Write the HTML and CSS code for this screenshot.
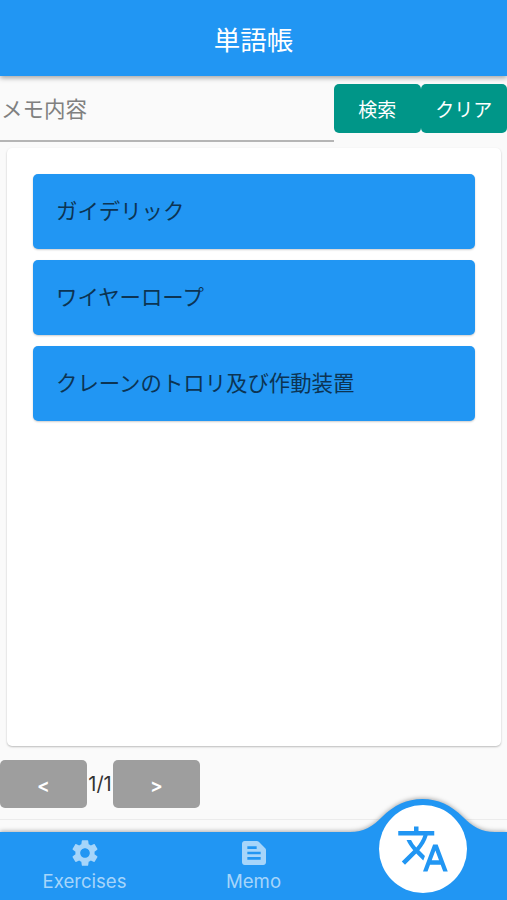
FILE: index.html
```html
<!DOCTYPE html>
<html lang="ja">

<head>
   <meta charset="UTF-8">
   <meta name="viewport" content="width=device-width, initial-scale=1.0">
   <title>単語帳</title>
   <link rel="stylesheet" href="styles.css">
</head>

<body>
   <div class="app">
      <header class="app-bar">
         <h1>単語帳</h1>
      </header>

      <div class="search">
         <input type="text" class="search-input" placeholder="メモ内容">
         <button class="btn">検索</button>
         <button class="btn">クリア</button>
      </div>

      <main class="card">
         <div class="word">ガイデリック</div>
         <div class="word">ワイヤーロープ</div>
         <div class="word">クレーンのトロリ及び作動装置</div>
      </main>

      <div class="pager">
         <button class="btn page-btn">&lt;</button>
         <span class="page-count">1/1</span>
         <button class="btn page-btn">&gt;</button>
      </div>

      <nav class="nav">
         <!-- Bar background with the raised bump -->
         <svg class="nav-shape" viewBox="0 0 507 110">
            <path d="M0 42H350C364 42 373 36 382 27C394 15 407 9 422.5 9C438 9 451 15 463 27C472 36 481 42 495 42H507V110H0Z" />
         </svg>
         <a class="nav-item">
            <svg class="nav-icon" viewBox="0 0 24 24">
               <path d="M19.14 12.94c.04-.3.06-.61.06-.94 0-.32-.02-.64-.07-.94l2.03-1.58c.18-.14.23-.41.12-.61l-1.92-3.32c-.12-.22-.37-.29-.59-.22l-2.39.96c-.5-.38-1.03-.7-1.62-.94l-.36-2.54c-.04-.24-.24-.41-.48-.41h-3.84c-.24 0-.43.17-.47.41l-.36 2.54c-.59.24-1.13.57-1.62.94l-2.39-.96c-.22-.08-.47 0-.59.22L2.74 8.87c-.12.21-.08.47.12.61l2.03 1.58c-.05.3-.09.63-.09.94s.02.64.07.94l-2.03 1.58c-.18.14-.23.41-.12.61l1.92 3.32c.12.22.37.29.59.22l2.39-.96c.5.38 1.03.7 1.62.94l.36 2.54c.05.24.24.41.48.41h3.84c.24 0 .44-.17.47-.41l.36-2.54c.59-.24 1.13-.56 1.62-.94l2.39.96c.22.08.47 0 .59-.22l1.92-3.32c.12-.22.07-.47-.12-.61l-2.01-1.58zM12 15.6c-1.98 0-3.6-1.62-3.6-3.6s1.62-3.6 3.6-3.6 3.6 1.62 3.6 3.6-1.62 3.6-3.6 3.6z" />
            </svg>
            <span>Exercises</span>
         </a>
         <a class="nav-item">
            <svg class="nav-icon" viewBox="0 0 24 24">
               <path d="M20.41 8.41l-4.83-4.83c-.37-.37-.88-.58-1.41-.58H5c-1.1 0-2 .9-2 2v14c0 1.1.9 2 2 2h14c1.1 0 2-.9 2-2V9.83c0-.53-.21-1.04-.59-1.42zM7 7h7v2H7V7zm10 10H7v-2h10v2zm0-4H7v-2h10v2z" />
            </svg>
            <span>Memo</span>
         </a>
         <a class="nav-item">
            <span class="nav-active">
               <svg viewBox="0 0 24 24">
                  <path d="M12.87 15.07l-2.54-2.51.03-.03c1.74-1.94 2.98-4.17 3.71-6.53H17V4h-7V2H8v2H1v1.99h11.17C11.5 7.92 10.44 9.75 9 11.35 8.07 10.32 7.3 9.19 6.69 8h-2c.73 1.63 1.73 3.17 2.98 4.56l-5.09 5.02L4 19l5-5 3.11 3.11.76-2.04zM18.5 10h-2L12 22h2l1.12-3h4.75L21 22h2l-4.5-12zm-2.62 7l1.62-4.33L19.12 17h-3.24z" />
               </svg>
            </span>
         </a>
      </nav>
   </div>
</body>

</html>
```
FILE: styles.css
```css
* {
   box-sizing: border-box;
}

body {
   margin: 0;
   background-color: #fafafa;
   font-family: Inter, "Noto Sans CJK JP", sans-serif;
   color: #333;
}

.app {
   display: flex;
   flex-direction: column;
   height: 900px;
   overflow: hidden;
}

/* Top bar */
.app-bar {
   display: flex;
   align-items: center;
   justify-content: center;
   height: 76px;
   background-color: #2196f3;
   box-shadow: 0 2px 5px rgba(0, 0, 0, 0.35);
}

.app-bar h1 {
   margin: 0;
   font-size: 26.5px;
   font-weight: 400;
   color: #fff;
}

/* Search row */
.search {
   display: flex;
   align-items: flex-start;
   height: 66px;
   padding-top: 8px;
}

.search-input {
   flex: 1;
   min-width: 0;
   height: 58px;
   padding: 0 1px 7px;
   border: none;
   border-bottom: 2px solid #b5b5b5;
   background: none;
   font-family: inherit;
   font-size: 21.5px;
   outline: none;
}

.search-input::placeholder {
   color: #808080;
   opacity: 1;
}

.btn {
   width: 86.5px;
   height: 49px;
   padding: 0;
   border: none;
   border-radius: 5px;
   background-color: #009688;
   color: #fff;
   font-family: inherit;
   font-size: 19px;
   font-weight: 400;
}

/* Word list */
.card {
   display: flex;
   flex-direction: column;
   gap: 11px;
   height: 598px;
   margin: 6px 6px 0 7px;
   padding: 26px;
   border-radius: 5px;
   background-color: #fff;
   box-shadow: 0 1px 2px rgba(0, 0, 0, 0.25);
}

.word {
   display: flex;
   align-items: center;
   height: 75px;
   padding: 0 23px 4px;
   border-radius: 5px;
   background-color: #2196f3;
   box-shadow: 0 1px 2px rgba(0, 0, 0, 0.2);
   font-size: 21.4px;
   color: #0c3453;
}

/* Pagination */
.pager {
   display: flex;
   align-items: center;
   height: 74px;
   padding-top: 3px;
   border-bottom: 1px solid #ececec;
}

.page-btn {
   width: 87px;
   height: 48px;
   padding-top: 2px;
   background-color: #9e9e9e;
   font-weight: 600;
}

.page-count {
   width: 26px;
   font-size: 20px;
   text-align: center;
   white-space: nowrap;
}

/* Bottom navigation */
.nav {
   position: relative;
   display: flex;
   height: 68px;
   margin-top: 12px;
}

.nav-shape {
   position: absolute;
   left: 0;
   bottom: 0;
   width: 507px;
   height: 110px;
   fill: #2196f3;
   filter: drop-shadow(0 -1px 2px rgba(0, 0, 0, 0.3));
}

.nav-item {
   position: relative;
   flex: 1;
   display: flex;
   flex-direction: column;
   align-items: center;
   padding-top: 5px;
   font-size: 18.6px;
   line-height: 24px;
   color: #a6d5fa;
}

.nav-icon {
   width: 32px;
   height: 32px;
   fill: #a6d5fa;
}

.nav-active {
   display: flex;
   flex-shrink: 0;
   align-items: center;
   justify-content: center;
   width: 88px;
   height: 88px;
   margin-top: -32px;
   border-radius: 50%;
   background-color: #fff;
}

.nav-active svg {
   width: 54px;
   height: 54px;
   fill: #2196f3;
}
```
